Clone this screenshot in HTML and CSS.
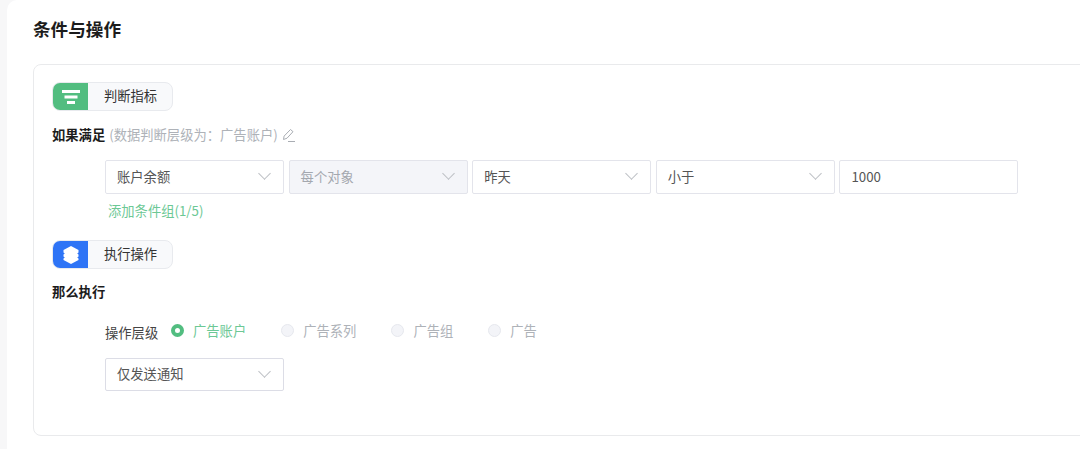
FILE: index.html
```html
<!DOCTYPE html>
<html lang="zh-CN">

<head>
    <meta charset="UTF-8">
    <meta name="viewport" content="width=device-width, initial-scale=1.0">
    <title>条件与操作</title>
    <link rel="stylesheet" href="styles.css">
</head>

<body>
    <div class="panel">
        <h2 class="panel-title">条件与操作</h2>
        <div class="card">
            <div class="tag">
                <span class="tag-icon green">
                    <svg width="20" height="16" viewBox="0 0 20 16">
                        <rect x="1" y="1" width="18" height="3" fill="#fff" />
                        <rect x="3.500" y="6.500" width="13" height="3" fill="#fff" />
                        <rect x="6" y="12" width="8" height="3" fill="#fff" />
                    </svg>
                </span>
                <span class="tag-text">判断指标</span>
            </div>
            <div class="row-title if-title">
                <b>如果满足</b>
                <span class="hint">(数据判断层级为：广告账户)</span>
                <svg class="edit" width="15" height="15" viewBox="0 0 15 15" fill="none" stroke="#a9adb3" stroke-width="1">
                    <path d="M2.500 11.500l.6-3.400L9.500 1.500l2.500 2.200-6 6.500z" />
                    <path d="M7 13.500h7" />
                </svg>
            </div>
            <div class="conditions">
                <div class="select"><span>账户余额</span><i class="arrow"></i></div>
                <div class="select disabled"><span>每个对象</span><i class="arrow"></i></div>
                <div class="select"><span>昨天</span><i class="arrow"></i></div>
                <div class="select"><span>小于</span><i class="arrow"></i></div>
                <div class="select"><span>1000</span></div>
            </div>
            <a class="add-link">添加条件组(1/5)</a>
            <div class="tag">
                <span class="tag-icon blue">
                    <svg width="20" height="20" viewBox="0 0 20 20">
                        <path d="M10 1l7.500 4v2.500l-1.300 1 1.300 1v2l-1.300 1 1.300 1V15l-7.500 4-7.500-4v-1.500l1.300-1-1.300-1v-2l1.300-1-1.300-1V5z" fill="#fff" />
                    </svg>
                </span>
                <span class="tag-text">执行操作</span>
            </div>
            <div class="row-title then-title"><b>那么执行</b></div>
            <div class="levels">
                <span class="level-label">操作层级</span>
                <label class="radio active"><i></i>广告账户</label>
                <label class="radio"><i></i>广告系列</label>
                <label class="radio"><i></i>广告组</label>
                <label class="radio"><i></i>广告</label>
            </div>
            <div class="select action"><span>仅发送通知</span><i class="arrow"></i></div>
        </div>
    </div>
</body>

</html>
```

FILE: styles.css
```css
* {
    box-sizing: border-box;
    margin: 0;
    padding: 0;
}

html,
body {
    width: 100%;
    height: 100%;
    overflow: hidden;
}

body {
    background: #f7f7f8;
    font-family: "Noto Sans CJK SC", "Liberation Sans", sans-serif;
    font-size: 13.3px;
    color: #333;
}

.panel {
    margin-left: 7px;
    height: 449px;
    padding: 17px 0 0 26px;
    background: #fff;
    border-top-left-radius: 10px;
    overflow: hidden;
}

.panel-title {
    height: 47px;
    font-size: 17.6px;
    line-height: 24px;
    font-weight: 700;
    color: #1c1c1c;
}

.card {
    width: 1100px;
    height: 372px;
    padding: 17px 18px;
    border: 1px solid #e9eaec;
    border-radius: 8px;
}

.tag {
    display: flex;
    width: 121px;
    height: 29px;
    background: #f8f9fb;
    border: 1px solid #e8eaee;
    border-radius: 8px;
    overflow: hidden;
}

.tag-icon {
    display: flex;
    align-items: center;
    justify-content: center;
    width: 36px;
    margin: -1px 0 -1px -1px;
    padding-left: 1px;
    flex: none;
}

.tag-icon.green {
    background: #52bd80;
}

.tag-icon.blue {
    background: #2e74f6;
}

.tag-text {
    flex: 1;
    padding-left: 1px;
    text-align: center;
    line-height: 26px;
    color: #333;
}

.row-title {
    display: flex;
    align-items: center;
    line-height: 20px;
}

.row-title b {
    font-weight: 700;
    color: #1c1c1c;
}

.if-title {
    margin-top: 14px;
}

.hint {
    margin-left: 4px;
    color: #aeb2b8;
}

.edit {
    margin-left: 3px;
}

.conditions {
    display: flex;
    gap: 4.6px;
    margin: 15px 0 0 53px;
}

.select {
    position: relative;
    display: flex;
    align-items: center;
    width: 179px;
    height: 33px;
    padding: 0 0 2px 11px;
    background: #fff;
    border: 1px solid #e3e4eb;
    border-radius: 2px;
    color: #555;
    flex: none;
}

.conditions .select {
    height: 34px;
}

.select.disabled {
    background: #f4f5f9;
    color: #a4a8af;
}

.select.action {
    margin: 17px 0 0 53px;
    border-color: #dcdde6;
}

.arrow {
    position: absolute;
    top: 8px;
    right: 14px;
    width: 9px;
    height: 9px;
    border-right: 1px solid #bcbfc4;
    border-bottom: 1px solid #bcbfc4;
    transform: rotate(45deg);
}

.add-link {
    display: block;
    margin: 7px 0 0 56px;
    height: 20px;
    line-height: 20px;
    color: #6cc895;
}

.add-link + .tag {
    margin-top: 19px;
}

.then-title {
    margin-top: 13px;
}

.levels {
    display: flex;
    align-items: center;
    height: 20px;
    margin: 19px 0 0 53px;
}

.level-label {
    width: 66px;
    margin-top: 2px;
    color: #444;
    flex: none;
}

.radio {
    display: flex;
    align-items: center;
    color: #aeb2b8;
    margin: -2px 35px 0 0;
}

.radio i {
    width: 13px;
    height: 13px;
    margin-right: 9px;
    background: #f3f4f8;
    border: 1px solid #e6e8ee;
    border-radius: 50%;
}

.radio.active {
    color: #6cc895;
}

.radio.active i {
    background: #fff;
    border: 4px solid #52bd80;
}
```
